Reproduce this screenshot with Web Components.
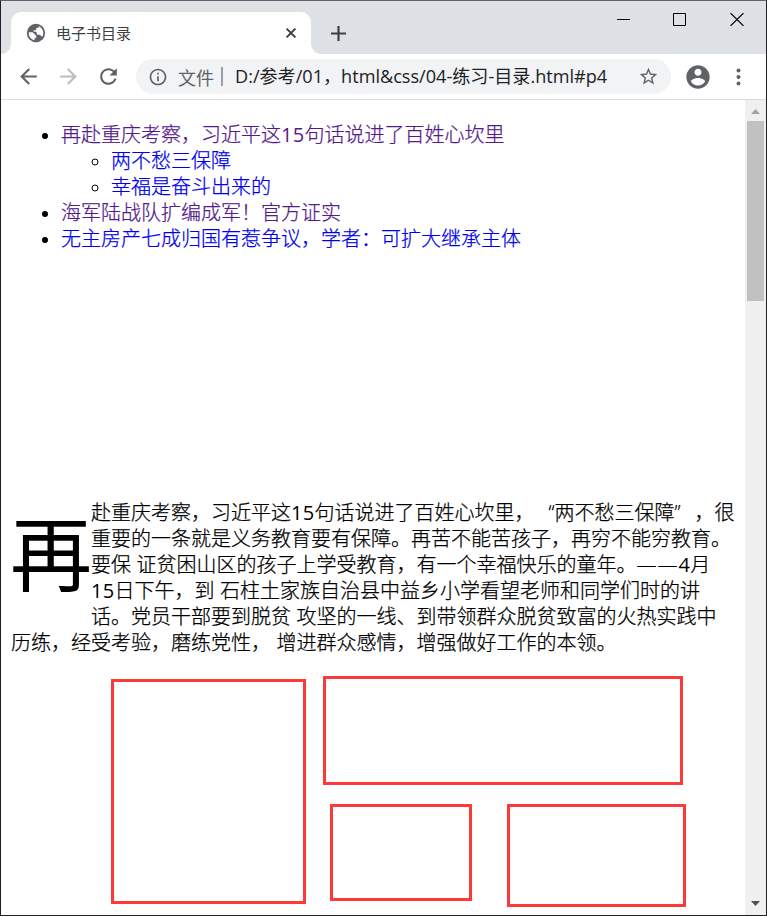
<!DOCTYPE html>
<html lang="zh-CN">
<head>
<meta charset="utf-8">
<title>电子书目录</title>
<style>
html,body{margin:0;height:100%;overflow:hidden;background:#fff}
</style>
</head>
<body>
<browser-window></browser-window>
<script>
const define = (name, html) => {
  const t = document.createElement('template');
  t.innerHTML = html.trim();
  customElements.define(name, class extends HTMLElement {
    constructor() {
      super();
      this.attachShadow({ mode: 'open' }).append(t.content.cloneNode(true));
    }
  });
};

define('tab-strip', `
<style>
:host{display:flex;height:53px;background:#dee1e6;box-sizing:border-box;padding:11px 0 0 10px;justify-content:space-between}
.tabs{display:flex}
.tab{position:relative;width:300px;height:42px;background:#fff;border-radius:10px 10px 0 0;display:flex;align-items:center;box-sizing:border-box;padding:0 14px 0 14px}
.tab::before,.tab::after{content:"";position:absolute;bottom:0;width:10px;height:10px}
.tab::before{left:-10px;background:radial-gradient(circle at 0 0,transparent 9.5px,#fff 10.2px)}
.tab::after{right:-10px;background:radial-gradient(circle at 100% 0,transparent 9.5px,#fff 10.2px)}
.title{flex:1;margin-left:9px;font-size:15px;line-height:20px;color:#3c4043;white-space:nowrap}
svg{display:block;flex:none}
.plus{margin:14px 0 0 20px}
.controls{display:flex;gap:43px;margin:1px 22px 0 0}
</style>
<div class="tabs">
  <div class="tab">
    <svg width="22" height="22" viewBox="0 0 24 24"><circle cx="12" cy="12" r="10" fill="#5f6368"/><path fill="#fff" d="M4.1 11.2h4.2l4 3.8v2l-1.9 1v2C6.900 19.400 4.100 16 4.100 12.400zM14.800 4.600c3.100 1.100 5.200 4.100 5.200 7.400 0 1.500-.4 2.900-1.100 4.100L16 14h-2.700l-1-3.300H9.500V9.100h2.300l1-2.700h2z"/></svg>
    <span class="title">电子书目录</span>
    <svg width="12" height="12" viewBox="0 0 12 12"><path d="M1.600 1.600l8.800 8.800M10.400 1.600l-8.800 8.800" stroke="#3c4043" stroke-width="2"/></svg>
  </div>
  <svg class="plus" width="15" height="15" viewBox="0 0 15 15"><path d="M7.500 0v15M0 7.500h15" stroke="#3c4043" stroke-width="2.200"/></svg>
</div>
<div class="controls">
  <svg width="13" height="13"><path d="M0 6.500h13" stroke="#000"/></svg>
  <svg width="13" height="13"><path d="M.5.5h12v12h-12z" fill="none" stroke="#000"/></svg>
  <svg width="15" height="13"><path d="M1.500 0l13 13M14.500 0l-13 13" stroke="#000" stroke-width="1.100"/></svg>
</div>`);

define('tool-bar', `
<style>
:host{display:flex;align-items:center;height:46px;box-sizing:border-box;border-bottom:1px solid #dadce0;background:#fff;padding-left:15px}
svg{display:block;flex:none;fill:#5f6368}
.nav{display:flex;gap:15px;width:120px}
.pill{display:flex;align-items:center;width:535px;height:35px;box-sizing:border-box;border-radius:18px;background:#f1f3f4;padding:0 12px 0 12px}
.scheme{font-size:18px;color:#5f6368;margin-left:10px;white-space:nowrap;line-height:24px}
.bar{width:2px;height:19px;background:#9aa0a6;margin:0 12px 0 7px}
.url{flex:1;font:18.100px/24px "Open Sans","Noto Sans CJK SC",sans-serif;color:#202124;white-space:nowrap;padding-bottom:1px}
.me{margin:0 13px 0 13px}
</style>
<div class="nav">
  <svg width="25" height="25" viewBox="0 0 24 24"><path d="M20 11H7.830l5.590-5.590L12 4l-8 8 8 8 1.410-1.410L7.830 13H20v-2z"/></svg>
  <svg width="25" height="25" viewBox="0 0 24 24" style="fill:#babcbe"><path d="M12 4l-1.410 1.410L16.170 11H4v2h12.170l-5.580 5.590L12 20l8-8z"/></svg>
  <svg width="25" height="25" viewBox="0 0 24 24"><path d="M17.650 6.350C16.200 4.900 14.210 4 12 4c-4.420 0-7.990 3.580-7.990 8s3.570 8 7.990 8c3.730 0 6.840-2.550 7.730-6h-2.080c-.82 2.330-3.040 4-5.650 4-3.310 0-6-2.690-6-6s2.690-6 6-6c1.660 0 3.140.69 4.220 1.780L13 11h7V4l-2.350 2.350z"/></svg>
</div>
<div class="pill">
  <svg width="20" height="20" viewBox="0 0 24 24"><path d="M11 17h2v-6h-2v6zm1-15C6.480 2 2 6.480 2 12s4.480 10 10 10 10-4.480 10-10S17.520 2 12 2zm0 18c-4.410 0-8-3.590-8-8s3.590-8 8-8 8 3.590 8 8-3.590 8-8 8zM11 9h2V7h-2v2z"/></svg>
  <span class="scheme">文件</span><span class="bar"></span>
  <span class="url">D:/参考/01，html&amp;css/04-练习-目录.html#p4</span>
  <svg width="21" height="21" viewBox="0 0 24 24"><path d="M22 9.240l-7.190-.62L12 2 9.190 8.630 2 9.240l5.460 4.730L5.820 21 12 17.270 18.180 21l-1.630-7.030L22 9.240zM12 15.400l-3.760 2.270 1-4.280-3.320-2.880 4.380-.38L12 6.100l1.710 4.040 4.380.38-3.320 2.880 1 4.280L12 15.400z"/></svg>
</div>
<svg class="me" width="28" height="28" viewBox="0 0 24 24"><path d="M12 2C6.480 2 2 6.480 2 12s4.480 10 10 10 10-4.480 10-10S17.520 2 12 2zm0 3c1.660 0 3 1.340 3 3s-1.340 3-3 3-3-1.340-3-3 1.340-3 3-3zm0 14.200c-2.500 0-4.710-1.280-6-3.220.03-1.990 4-3.080 6-3.080 1.990 0 5.970 1.090 6 3.080-1.290 1.940-3.500 3.220-6 3.220z"/></svg>
<svg width="26" height="26" viewBox="0 0 26 26"><circle cx="13.500" cy="6.500" r="2"/><circle cx="13.500" cy="13" r="2"/><circle cx="13.500" cy="19.500" r="2"/></svg>`);

define('scroll-bar', `
<style>
:host{display:flex;flex-direction:column;align-items:center;width:21px;background:#f0f0f0}
svg{display:block;margin:9px 0 7px}
.thumb{width:17px;height:180px;background:#c1c1c1}
.down{margin:auto 0 9px}
</style>
<svg width="9" height="5"><path d="M0 5L4.500 0 9 5z" fill="#a3a3a3"/></svg>
<div class="thumb"></div>
<svg class="down" width="9" height="5"><path d="M0 0L4.500 5 9 0z" fill="#505050"/></svg>`);

/* Latin digits set in a humanist face */
define('latin-num', `
<style>:host{font-family:"Open Sans",sans-serif;font-weight:400;letter-spacing:.3px;-webkit-text-stroke:0}</style><slot></slot>`);

/* Full-width quotation mark: one em wide, glyph pushed to one side */
define('wide-quote', `
<style>:host{display:inline-block;width:1em;text-align:left;font-family:"Open Sans",sans-serif;line-height:24px}:host([open]){text-align:right}</style><slot></slot>`);

define('contents-list', `
<style>
:host{display:block}
ul{margin:0;padding-left:50px}
a{color:#551a8b;text-decoration:none}
a.new{color:#00e}
</style>
<ul>
  <li><a>再赴重庆考察，习近平这<latin-num>15</latin-num>句话说进了百姓心坎里</a>
    <ul><li><a class="new">两不愁三保障</a></li><li><a class="new">幸福是奋斗出来的</a></li></ul>
  </li>
  <li><a>海军陆战队扩编成军！官方证实</a></li>
  <li><a class="new">无主房产七成归国有惹争议，学者：可扩大继承主体</a></li>
</ul>`);

define('drop-cap-text', `
<style>
:host{display:block;white-space:nowrap}
.cap{float:left;box-sizing:border-box;width:80px;height:115px;margin-left:-1px;margin-right:1px;font-size:82px;line-height:114px;font-weight:400;-webkit-text-stroke:0}
</style>
<span class="cap"><slot name="cap"></slot></span><slot></slot>`);

define('frame-box', `
<style>:host{display:block;box-sizing:border-box;border:3px solid #ff3838}</style>`);

define('frame-group', `
<style>
:host{display:flex;align-items:flex-start;gap:17px;padding-left:100px}
.a{width:195px;height:225px;margin-top:3px}
.b{width:360px;height:109px}
.row{display:flex;align-items:flex-start;gap:35px;padding:19px 0 0 7px}
.c{width:142px;height:97px}
.d{width:179px;height:103px}
</style>
<frame-box class="a"></frame-box>
<div><frame-box class="b"></frame-box><div class="row"><frame-box class="c"></frame-box><frame-box class="d"></frame-box></div></div>`);

define('browser-window', `
<style>
:host{display:flex;flex-direction:column;box-sizing:border-box;width:767px;height:916px;border:1px solid #202022;border-top-color:#636467;font-family:"Noto Sans CJK SC",sans-serif;background:#fff}
.view{display:flex;flex:1;min-height:0}
main{flex:1;min-width:0;padding:22px 10px 0;overflow:hidden;font-family:"Liberation Sans","Noto Sans CJK SC",sans-serif;font-size:20px;line-height:26px;font-weight:300;-webkit-text-stroke:.25px;color:#000}
.dash{font-family:"Open Sans",sans-serif;letter-spacing:1px}
drop-cap-text{margin-top:248px}
frame-group{margin-top:20px}
</style>
<tab-strip></tab-strip>
<tool-bar></tool-bar>
<div class="view">
  <main>
    <contents-list></contents-list>
    <drop-cap-text><span slot="cap">再</span>赴重庆考察，习近平这<latin-num>15</latin-num>句话说进了百姓心坎里，<wide-quote open>“</wide-quote>两不愁三保障<wide-quote>”</wide-quote>，很<br>重要的一条就是义务教育要有保障。再苦不能苦孩子，再穷不能穷教育。<br>要保 证贫困山区的孩子上学受教育，有一个幸福快乐的童年。<span class="dash">——</span><latin-num>4</latin-num>月<br><latin-num>15</latin-num>日下午，到 石柱土家族自治县中益乡小学看望老师和同学们时的讲<br>话。党员干部要到脱贫 攻坚的一线、到带领群众脱贫致富的火热实践中<br>历练，经受考验，磨练党性， 增进群众感情，增强做好工作的本领。</drop-cap-text>
    <frame-group></frame-group>
  </main>
  <scroll-bar></scroll-bar>
</div>`);
</script>
</body>
</html>
